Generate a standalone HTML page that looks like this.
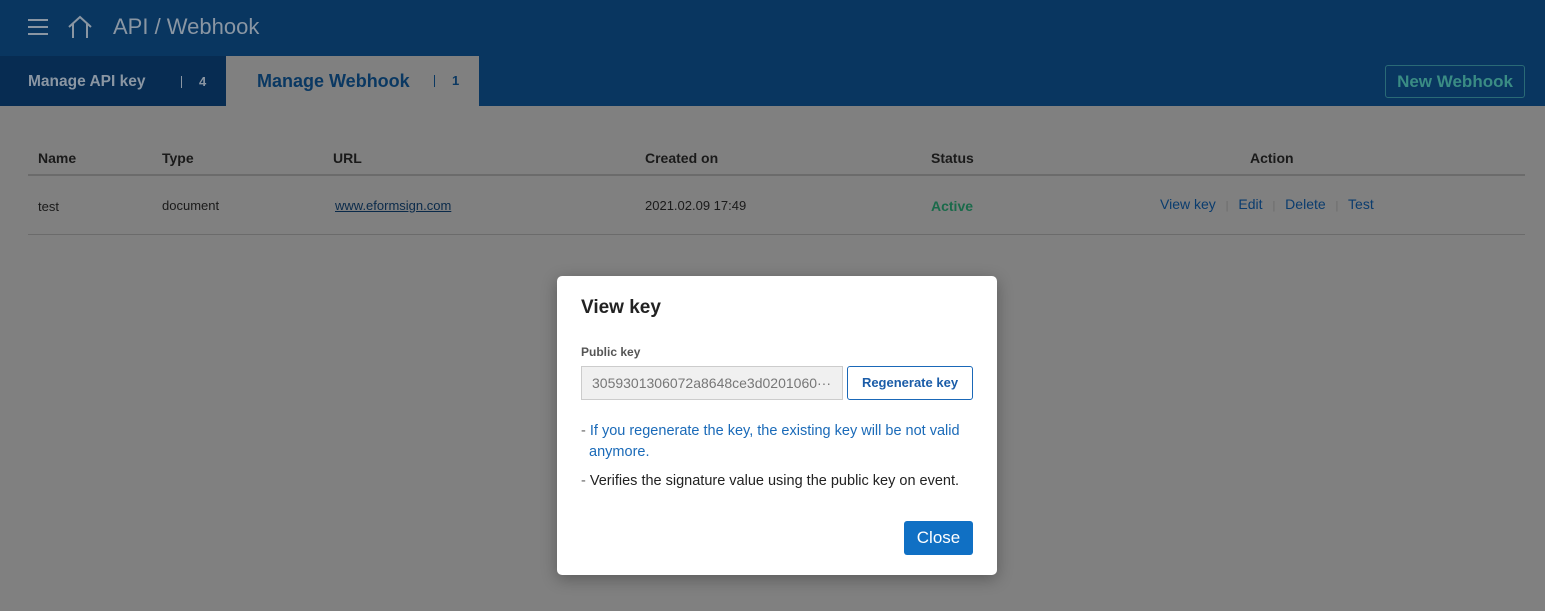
<!DOCTYPE html>
<html><head><meta charset="utf-8"><style>
*{margin:0;padding:0;box-sizing:border-box}
body{width:1545px;height:611px;overflow:hidden;background:#808080;font-family:"Liberation Sans","Noto Sans CJK KR",sans-serif;position:relative}
.hdr{position:absolute;left:0;top:0;width:1545px;height:106px;background:#093660}
.t{position:absolute;white-space:nowrap}
.tab0{position:absolute;left:0;top:56px;width:226px;height:50px;background:#072c52}
.tab1{position:absolute;left:226px;top:56px;width:253px;height:50px;background:#808080}
.th{font-size:14px;font-weight:bold;color:#1a1a1a;top:150px}
.td{font-size:13px;color:#1a1a1a;top:198px}
.line{position:absolute;left:28px;width:1497px;height:2px;background:#6b6b6b}
.modal{position:absolute;left:557px;top:276px;width:440px;height:299px;background:#fff;border-radius:5px;box-shadow:0 4px 16px rgba(0,0,0,.3)}
</style></head><body>
<div class="hdr"></div>
<div style="position:absolute;left:28px;top:19px;width:20px;height:2px;background:#8a96a3;box-shadow:0 7px 0 #8a96a3,0 14px 0 #8a96a3"></div>
<svg style="position:absolute;left:67px;top:15px" width="26" height="24" viewBox="0 0 26 24"><path d="M2 12 L13 2 L24 12 M6 9 V23 M20 9 V23" fill="none" stroke="#8a96a3" stroke-width="2"/></svg>
<div class="t" style="left:113px;top:14px;font-size:22px;color:#8a96a3">API / Webhook</div>
<div class="tab0"></div><div class="tab1"></div>
<div class="t" style="left:28px;top:73px;font-size:15.5px;font-weight:bold;color:#8a96a3">Manage API key</div>
<div class="t" style="left:181px;top:76px;width:1px;height:12px;background:#8a96a3"></div>
<div class="t" style="left:199px;top:74px;font-size:13px;font-weight:bold;color:#8a96a3">4</div>
<div class="t" style="left:257px;top:71px;font-size:18px;font-weight:bold;color:#0a3862">Manage Webhook</div>
<div class="t" style="left:434px;top:75px;width:1px;height:12px;background:#0a3862"></div>
<div class="t" style="left:452px;top:73px;font-size:13px;font-weight:bold;color:#0a3862">1</div>
<div class="t" style="left:1385px;top:65px;width:140px;height:33px;border:1px solid #2a6a76;border-radius:3px;color:#3a8c84;font-size:17px;font-weight:bold;text-align:center;line-height:31px">New Webhook</div>
<div class="t th" style="left:38px">Name</div>
<div class="t th" style="left:162px">Type</div>
<div class="t th" style="left:333px">URL</div>
<div class="t th" style="left:645px">Created on</div>
<div class="t th" style="left:931px">Status</div>
<div class="t th" style="left:1250px">Action</div>
<div class="line" style="top:174px"></div>
<div class="t td" style="left:38px;top:199px">test</div>
<div class="t td" style="left:162px">document</div>
<div class="t td" style="left:335px;color:#0a2a4a;text-decoration:underline">www.eformsign.com</div>
<div class="t td" style="left:645px">2021.02.09 17:49</div>
<div class="t td" style="left:931px;color:#1a6a4a;font-weight:bold;font-size:14px">Active</div>
<div class="t td" style="left:1160px;color:#0a3c6e;font-size:14px;top:196px">View key <span style="color:#6a6a6a;font-size:11px;margin:0 6px">|</span> Edit <span style="color:#6a6a6a;font-size:11px;margin:0 6px">|</span> Delete <span style="color:#6a6a6a;font-size:11px;margin:0 6px">|</span> Test</div>
<div class="line" style="top:234px;height:1px"></div>
<div class="modal">
<div class="t" style="left:24px;top:21px;font-size:19px;font-weight:bold;color:#222">View key</div>
<div class="t" style="left:24px;top:69px;font-size:12px;font-weight:bold;color:#555">Public key</div>
<div class="t" style="left:24px;top:90px;width:262px;height:34px;background:#f0f0f0;border:1px solid #ccc;font-size:14px;color:#777;line-height:32px;padding-left:10px;overflow:hidden">3059301306072a8648ce3d0201060···</div>
<div class="t" style="left:290px;top:90px;width:126px;height:34px;border:1px solid #1a68b8;border-radius:3px;font-size:13px;font-weight:bold;color:#1a5ca8;text-align:center;line-height:32px">Regenerate key</div>
<div class="t" style="left:24px;top:145px;font-size:14.5px;color:#1a6ab8;line-height:21px;white-space:normal;width:410px"><span style="color:#666">- </span>If you regenerate the key, the existing key will be not valid<br>&nbsp;&nbsp;anymore.</div>
<div class="t" style="left:24px;top:197px;font-size:14.5px;color:#222"><span style="color:#666">- </span>Verifies the signature value using the public key on event.</div>
<div class="t" style="left:347px;top:245px;width:69px;height:34px;background:#1070c4;border-radius:3px;color:#fff;font-size:17px;text-align:center;line-height:34px">Close</div>
</div>
</body></html>
